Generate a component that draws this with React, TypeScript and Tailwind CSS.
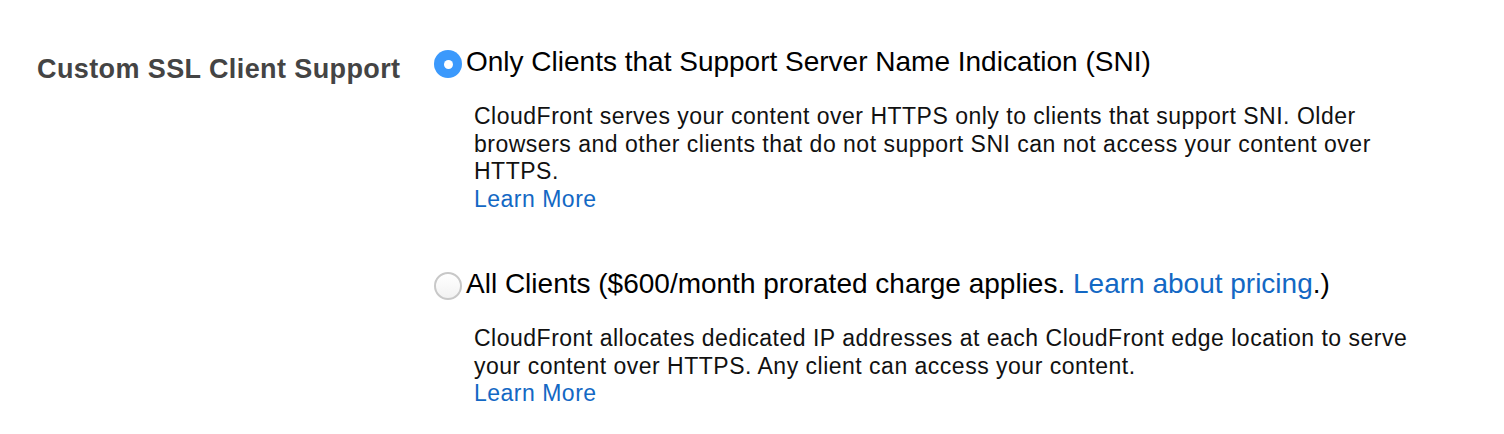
const Radio = ({ checked }: { checked: boolean }) =>
  checked ? (
    <span className="mt-[3px] flex h-[28px] w-[28px] shrink-0 items-center justify-center rounded-full bg-[#3b99fc]">
      <span className="h-[9px] w-[9px] rounded-full bg-white" />
    </span>
  ) : (
    <span className="mt-[3px] h-[28px] w-[28px] shrink-0 rounded-full border-2 border-[#c8c8c8] bg-gradient-to-b from-white to-[#f2f2f2]" />
  );

const LearnMore = () => (
  <a href="#" className="text-[#1368c4]">
    Learn More
  </a>
);

const Option = ({
  checked,
  label,
  children,
}: {
  checked: boolean;
  label: React.ReactNode;
  children: React.ReactNode;
}) => (
  <div>
    <div className="flex items-start">
      <Radio checked={checked} />
      <span className="ml-[4px] text-[28px] leading-[30px] text-black">{label}</span>
    </div>
    <div className="mt-[25px] w-[1000px] pl-[40px] text-[23px] leading-[27.5px] tracking-[0.5px] text-[#111]">
      {children}
    </div>
  </div>
);

export default function App() {
  return (
    <div className="flex min-h-[434px] bg-white pt-[47px] font-['Liberation_Sans',Arial,sans-serif]">
      <div className="w-[434px] shrink-0 pl-[37px] pt-[6px] text-[27px] font-bold leading-[32px] tracking-[0.4px] text-[#444]">
        Custom SSL Client Support
      </div>
      <div className="flex flex-col gap-[56px]">
        <Option checked label="Only Clients that Support Server Name Indication (SNI)">
          <p>
            CloudFront serves your content over HTTPS only to clients that support SNI. Older browsers and other
            clients that do not support SNI can not access your content over HTTPS.
          </p>
          <LearnMore />
        </Option>
        <Option
          checked={false}
          label={
            <>
              All Clients ($600/month prorated charge applies.{" "}
              <a href="#" className="text-[#1368c4]">
                Learn about pricing
              </a>
              .)
            </>
          }
        >
          <p>
            CloudFront allocates dedicated IP addresses at each CloudFront edge location to serve your content over
            HTTPS. Any client can access your content.
          </p>
          <LearnMore />
        </Option>
      </div>
    </div>
  );
}
